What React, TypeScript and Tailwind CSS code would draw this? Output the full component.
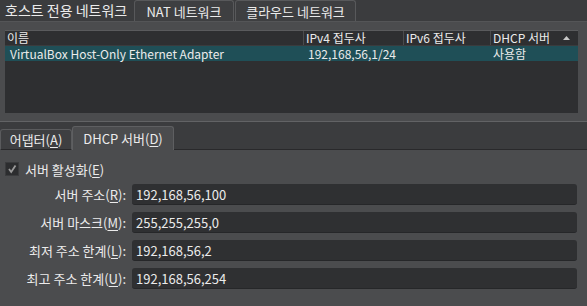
import React from "react";

const U = ({ c }: { c: string }) => <span className="underline underline-offset-2">{c}</span>;

function Field({ label, mn, value }: { label: string; mn: string; value: string }) {
  return (
    <div className="flex items-center h-[21px]">
      <div className="w-[127px] text-right pr-[1px] whitespace-nowrap">
        {label}(<U c={mn} />):
      </div>
      <div className="ml-[5px] w-[445px] h-[21px] bg-[#2f3032] rounded-[3px] flex items-center px-[4px] border-b border-[#262729]">
        {value}
      </div>
    </div>
  );
}

export default function App() {
  return (
    <div
      className="w-[587px] h-[306px] overflow-hidden bg-[#4b4c4e] text-[#ebebeb] text-[12px] leading-none"
      style={{ fontFamily: '"Noto Sans CJK KR", "Noto Sans", sans-serif' }}
    >
      {/* top tabs */}
      <div className="h-[22px] bg-[#3b3c3e] flex items-end border-b border-[#545557]">
        <div className="w-[134px] h-[22px] flex items-center pl-[5px] text-[14px]">호스트 전용 네트워크</div>
        <div className="w-[100px] h-[21px] flex items-center justify-center border border-b-0 border-[#58595b] rounded-t-[3px] bg-[#3e3f41] text-[13px]">
          NAT 네트워크
        </div>
        <div className="ml-[1px] w-[121px] h-[21px] flex items-center justify-center border border-b-0 border-[#58595b] rounded-t-[3px] bg-[#3e3f41] text-[13px]">
          클라우드 네트워크
        </div>
      </div>

      {/* table */}
      <div className="mt-[8px] ml-[5px] w-[573px] h-[83px] bg-[#2e2f31] border-t border-[#5a5b5d] overflow-hidden">
        <div className="flex h-[15px] items-center border-b border-[#3a3b3d] text-[12px]">
          <div className="w-[298px] pl-[2px] h-full flex items-center">이름</div>
          <div className="w-[100px] pl-[2px] border-l border-[#4a4b4d] h-full flex items-center">IPv4 접두사</div>
          <div className="w-[87px] pl-[2px] border-l border-[#4a4b4d] h-full flex items-center">IPv6 접두사</div>
          <div className="flex-1 pl-[2px] border-l border-[#4a4b4d] h-full flex items-center justify-between pr-[8px]">
            <span>DHCP 서버</span>
            <svg width="7" height="4" viewBox="0 0 7 4"><polygon points="3.5,0 7,4 0,4" fill="#c8c8c8" /></svg>
          </div>
        </div>
        <div className="flex h-[15px] items-center bg-[#1f4f57]">
          <div className="w-[298px] pl-[5px]">VirtualBox Host-Only Ethernet Adapter</div>
          <div className="w-[100px] pl-[5px]">192,168,56,1/24</div>
          <div className="w-[87px]"></div>
          <div className="flex-1 pl-[3px]">사용함</div>
        </div>
      </div>

      {/* bottom tabs */}
      <div className="mt-[8px] h-[29px] bg-[#3b3c3e] border-t border-[#626365] flex items-end">
        <div className="w-[72px] h-[21px] flex items-center justify-center border border-[#5a5b5d] border-b-[#29292b] rounded-t-[3px] bg-[#3e3f41] text-[13px]">
          어댑터(<U c="A" />)
        </div>
        <div className="w-[102px] h-[24px] flex items-center justify-center border border-b-0 border-[#5e5f61] rounded-t-[3px] bg-[#4b4c4e] text-[13px]">
          DHCP 서버(<U c="D" />)
        </div>
        <div className="flex-1 h-[1px] bg-[#29292b]"></div>
      </div>

      {/* content */}
      <div className="pt-[12px]">
        <div className="flex items-center h-[14px] pl-[5px]">
          <div className="w-[14px] h-[14px] bg-[#2c2d2f] border border-[#3a3b3d] flex items-center justify-center">
            <svg width="10" height="10" viewBox="0 0 10 10">
              <path d="M2 5 L4.2 8 L8.5 1.5" stroke="#9a9a9a" strokeWidth="1.8" fill="none" />
            </svg>
          </div>
          <span className="ml-[6px] text-[13px]">서버 활성화(<U c="E" />)</span>
        </div>
        <div className="mt-[8px] flex flex-col gap-[7px] text-[13px]">
          <Field label="서버 주소" mn="R" value="192,168,56,100" />
          <Field label="서버 마스크" mn="M" value="255,255,255,0" />
          <Field label="최저 주소 한계" mn="L" value="192,168,56,2" />
          <Field label="최고 주소 한계" mn="U" value="192,168,56,254" />
        </div>
      </div>
    </div>
  );
}
